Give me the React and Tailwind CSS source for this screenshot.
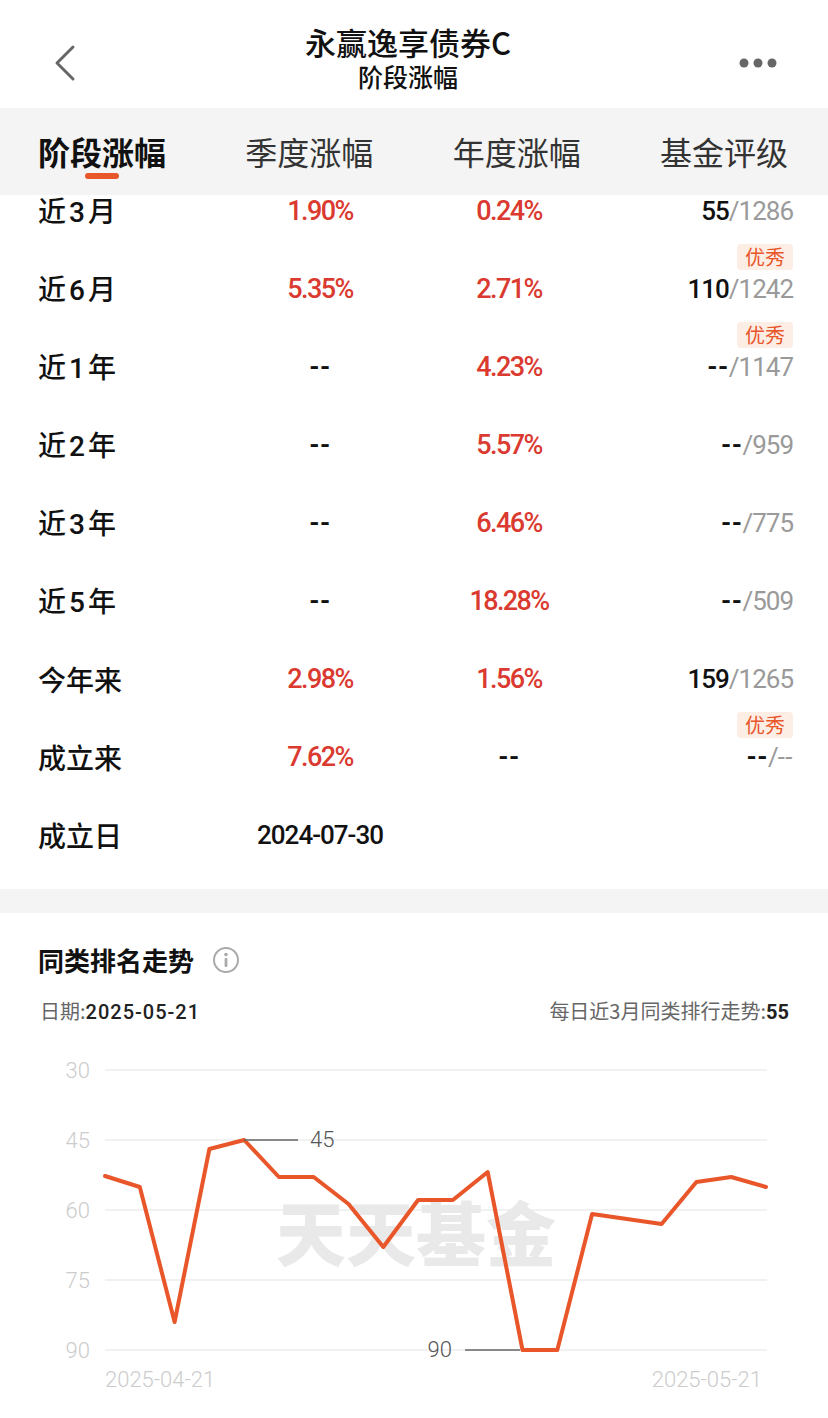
import React from 'react';

const CJK = { fontFamily: '"Noto Sans CJK SC", "Noto Sans", sans-serif' };
const NUM = { fontFamily: 'Roboto, "Noto Sans CJK SC", sans-serif' };

const rows = [
  { label: '近3月', q: '1.90%', y: '0.24%', rank: '55', total: '1286' },
  { label: '近6月', q: '5.35%', y: '2.71%', rank: '110', total: '1242', badge: true },
  { label: '近1年', q: '--', y: '4.23%', rank: '--', total: '1147', badge: true },
  { label: '近2年', q: '--', y: '5.57%', rank: '--', total: '959' },
  { label: '近3年', q: '--', y: '6.46%', rank: '--', total: '775' },
  { label: '近5年', q: '--', y: '18.28%', rank: '--', total: '509' },
  { label: '今年来', q: '2.98%', y: '1.56%', rank: '159', total: '1265' },
  { label: '成立来', q: '7.62%', y: '--', rank: '--', total: '--', badge: true },
];

const points = [125, 136, 271, 98, 89, 126, 126, 153, 196, 149, 149, 121, 299, 299, 163, 168, 173, 131, 126, 136];

function Value({ v }) {
  const dash = v === '--';
  return (
    <span style={NUM} className={dash ? 'text-[26px] font-bold tracking-[0.5px] text-[#111]' : 'text-[27px] font-medium tracking-[-1.6px] text-[#da3a2f]'}>
      {v}
    </span>
  );
}

function Label({ text }) {
  // digits in the labels sit with a little air around them
  const parts = text.split(/(\d)/);
  return (
    <div className="w-[180px] text-[28px] font-medium">
      {parts.map((p, i) =>
        /\d/.test(p) ? (
          <span key={i} style={NUM} className="mx-[3px]">{p}</span>
        ) : (
          <span key={i}>{p}</span>
        )
      )}
    </div>
  );
}

function RankChart() {
  const xs = points.map((_, i) => 105 + i * 34.79);
  const d = points.map((y, i) => `${i === 0 ? 'M' : 'L'}${xs[i].toFixed(1)} ${y}`).join(' ');
  const grid = [
    { v: '30', y: 19 },
    { v: '45', y: 89 },
    { v: '60', y: 159 },
    { v: '75', y: 229 },
    { v: '90', y: 299 },
  ];
  return (
    <svg width="828" height="368" viewBox="0 0 828 368" className="block">
      {grid.map((g) => (
        <g key={g.v}>
          <line x1="105" x2="767" y1={g.y} y2={g.y} stroke="#f1f1f1" strokeWidth="2" />
          <text x="90" y={g.y + 8} textAnchor="end" fontSize="22" fontWeight="300" fill="#cccccc" style={NUM}>
            {g.v}
          </text>
        </g>
      ))}
      <text x="416" y="210" textAnchor="middle" fontSize="70" fontWeight="900" fill="#e9e9e9" style={CJK}>
        天天基金
      </text>
      <path d={d} fill="none" stroke="#e8562a" strokeWidth="4" strokeLinejoin="round" strokeLinecap="round" />
      <line x1="244" x2="298" y1="89" y2="89" stroke="#666" strokeWidth="1.5" />
      <text x="310" y="96" fontSize="22" fontWeight="300" fill="#555" style={NUM}>45</text>
      <line x1="465" x2="520" y1="299" y2="299" stroke="#666" strokeWidth="1.5" />
      <text x="452" y="306" textAnchor="end" fontSize="22" fontWeight="300" fill="#555" style={NUM}>90</text>
      <text x="105" y="336" fontSize="22" fontWeight="300" fill="#cccccc" style={NUM}>2025-04-21</text>
      <text x="762" y="336" textAnchor="end" fontSize="22" fontWeight="300" fill="#cccccc" style={NUM}>2025-05-21</text>
    </svg>
  );
}

export default function App() {
  return (
    <div style={CJK} className="w-[828px] h-[1418px] bg-white overflow-hidden text-[#111]">
      {/* header */}
      <div className="h-[108px] flex items-center justify-between px-[52px] pt-[18px]">
        <svg width="26" height="40" viewBox="0 0 26 40">
          <path d="M21 4 L5 20 L21 36" fill="none" stroke="#666" strokeWidth="3" strokeLinecap="round" strokeLinejoin="round" />
        </svg>
        <div className="flex flex-col items-center -mt-[12px]">
          <div className="text-[31px] leading-[33px] font-medium">永赢逸享债券C</div>
          <div className="text-[25px] leading-[28px] font-medium mt-[4px]">阶段涨幅</div>
        </div>
        <svg width="40" height="12" viewBox="0 0 40 12" className="mr-[-2px]">
          <circle cx="6" cy="6" r="4.5" fill="#666" />
          <circle cx="20" cy="6" r="4.5" fill="#666" />
          <circle cx="34" cy="6" r="4.5" fill="#666" />
        </svg>
      </div>

      {/* tabs */}
      <div className="relative z-10 h-[87px] bg-[#f4f4f4] flex justify-between pl-[38px] pr-[40px] pt-[24px]">
        {['阶段涨幅', '季度涨幅', '年度涨幅', '基金评级'].map((t, i) => (
          <div key={t} className="flex flex-col items-center">
            <span className={i === 0 ? 'text-[32px] leading-[38px] font-bold text-[#111]' : 'text-[32px] leading-[38px] text-[#333]'}>{t}</span>
            {i === 0 && <span className="mt-[3px] w-[34px] h-[6px] rounded-full bg-[#e8562a]" />}
          </div>
        ))}
      </div>

      {/* table */}
      <div className="-mt-[23px] pb-[15px]">
        {rows.map((r) => (
          <div key={r.label} className="h-[78px] flex items-center pl-[38px] pr-[35px]">
            <Label text={r.label} />
            <div className="w-[204px] text-center"><Value v={r.q} /></div>
            <div className="w-[174px] text-center"><Value v={r.y} /></div>
            <div className="flex-1 flex justify-end">
              <div className="relative text-[26px] tracking-[-1px]" style={NUM}>
                {r.badge && (
                  <span style={CJK} className="absolute right-0 -top-[26px] h-[26px] w-[56px] rounded-[4px] bg-[#fdeee5] text-[#e8562a] text-[20px] leading-[26px] text-center tracking-normal">
                    优秀
                  </span>
                )}
                <span className={r.rank === '--' ? 'font-bold tracking-[0.5px] text-[#111]' : 'font-medium text-[#111]'}>{r.rank}</span>
                <span className="text-[#9a9a9a]">/</span>
                <span className={r.total === '--' ? 'text-[#9a9a9a] tracking-[0.5px]' : 'text-[#9a9a9a]'}>{r.total}</span>
              </div>
            </div>
          </div>
        ))}
        <div className="h-[78px] flex items-center pl-[38px]">
          <Label text="成立日" />
          <div className="w-[204px] text-center">
            <span style={NUM} className="text-[26px] font-medium tracking-[-1px] text-[#111]">2024-07-30</span>
          </div>
        </div>
      </div>

      <div className="h-[24px] bg-[#f4f4f4]" />

      {/* rank trend */}
      <div className="pt-[30px]">
        <div className="flex items-center gap-[18px] pl-[38px]">
          <span className="text-[26px] leading-[34px] font-bold">同类排名走势</span>
          <svg width="28" height="28" viewBox="0 0 28 28">
            <circle cx="14" cy="14" r="12" fill="none" stroke="#aaa" strokeWidth="2" />
            <circle cx="14" cy="8.5" r="1.8" fill="#aaa" />
            <rect x="12.6" y="12" width="2.8" height="9" rx="1" fill="#aaa" />
          </svg>
        </div>
        <div className="flex justify-between pl-[40px] pr-[39px] mt-[20px] text-[20px] leading-[28px]">
          <div>
            <span className="text-[#666]">日期:</span>
            <span className="text-[#222] font-medium tracking-[1px]" style={NUM}>2025-05-21</span>
          </div>
          <div>
            <span className="text-[#666]">每日近3月同类排行走势:</span>
            <span className="text-[#222] font-bold" style={NUM}>55</span>
          </div>
        </div>
        <div className="mt-[25px]">
          <RankChart />
        </div>
      </div>
    </div>
  );
}
